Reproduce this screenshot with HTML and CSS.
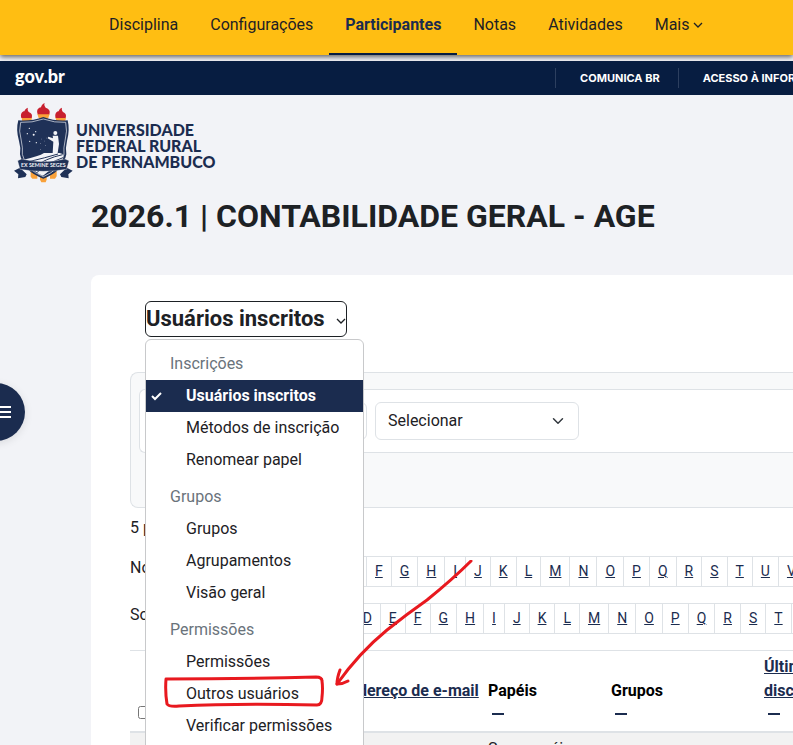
FILE: index.html
```html
<!DOCTYPE html>
<html lang="pt-br">
<head>
	<meta charset="utf-8">
	<title>2026.1 | CONTABILIDADE GERAL - AGE</title>
	<link rel="stylesheet" href="styles.css">
</head>
<body>

<nav class="course-nav">
	<a href="#">Disciplina</a>
	<a href="#">Configurações</a>
	<a href="#" class="active">Participantes</a>
	<a href="#">Notas</a>
	<a href="#">Atividades</a>
	<a href="#">Mais <svg class="caret" viewBox="0 0 10 6"><path d="M1 1l4 4 4-4"/></svg></a>
</nav>

<div class="govbar">
	<div class="govbar-brand"><a href="#">gov.br</a></div>
	<a class="govbar-link" href="#">COMUNICA BR</a>
	<a class="govbar-link" href="#">ACESSO À INFORMAÇÃO</a>
</div>

<header class="site-header">
	<a class="brand" href="#">
		<svg class="crest" viewBox="40 38 177 240">
			<!-- torches -->
			<g fill="#f9a13a">
				<path d="M63 83l31-2-2 12-4 3v10H70v-8l-5-3zM110 71h37l-4 12-4 4v10h-20V87l-5-4zM164 81l32 2-3 12-4 3v8h-18v-10l-4-3z"/>
				<path d="M90 240h20v25H95l-5-6zM118 246h20v22l-3 8h-13l-4-8zM148 240h20v18l-5 7h-15z"/>
			</g>
			<g fill="#c8202f">
				<path d="M62 83c-4-13 3-20 9-20 2-6 6-9 11-11-3 6 1 9 2 13 9 3 12 10 9 18zM111 72c-5-14 3-20 10-21 1-6 5-10 11-13-3 7 1 10 3 14 10 3 15 10 11 20zM165 83c-4-13 3-20 9-20 2-6 5-9 10-11-2 6 1 9 3 13 8 3 11 10 8 18z"/>
			</g>
			<!-- shield -->
			<path fill="#1f3157" d="M128 80q35 13 73 10 7 28-2 62-5 20-2 40-10 52-69 73-60-21-70-73 3-20-3-40-10-34-2-62 40 3 75-10z"/>
			<path fill="none" stroke="#f2f3f7" stroke-width="2" d="M128 86q34 12 67 10 6 25-2 56-5 21-3 40-10 46-62 67-53-21-63-67 2-19-3-40-9-31-2-56 34 2 68-10z"/>
			<!-- sower and field -->
			<g fill="#f2f3f7">
				<circle cx="164" cy="128" r="6"/>
				<path d="M156 136h16l3 25-4 27h-15l2-34-17-10 2-5 14 5z"/>
				<path d="M68 208q47-10 62-20h47l11 4-2 17-59 47q-14-4-24-14l37-30q-32 10-50 14-14-5-22-18z"/>
				<circle cx="86" cy="114" r="2"/><circle cx="105" cy="124" r="2"/>
				<circle cx="80" cy="130" r="2"/><circle cx="99" cy="133" r="3"/>
				<circle cx="87" cy="153" r="2"/><circle cx="107" cy="157" r="2"/>
				<circle cx="123" cy="146" r="1"/><circle cx="132" cy="152" r="1"/>
				<circle cx="120" cy="160" r="1"/><circle cx="134" cy="166" r="1"/>
				<circle cx="119" cy="178" r="1"/><circle cx="137" cy="143" r="1"/>
			</g>
			<path fill="none" stroke="#1f3157" stroke-width="3" d="M186 193q-50 10-94 42M187 202q-45 16-79 45M172 191q-40 12-84 22"/>
			<!-- ribbon -->
			<path fill="#1f3157" d="M40 241l18-9 20 20-4 8-22 4 1-12zM216 241l-18-9-20 20 4 8 22 4-1-12z"/>
			<path fill="#1f3157" stroke="#f2f3f7" stroke-width="1" d="M51 211l12-5q65 16 130 0l12 5-7 26q-70 12-140 0z"/>
			<text class="crest-motto" x="128" y="229" text-anchor="middle">EX SEMINE SEGES</text>
		</svg>
		<span class="brand-name">UNIVERSIDADE<br>FEDERAL RURAL<br>DE PERNAMBUCO</span>
	</a>
	<h1>2026.1 | CONTABILIDADE GERAL - AGE</h1>
</header>

<main class="content">
	<div class="tertiary-nav">
		<button type="button" class="select-toggle" aria-haspopup="listbox" aria-expanded="true">
			Usuários inscritos
			<svg class="caret" viewBox="0 0 10 6"><path d="M1 1l4 4 4-4"/></svg>
		</button>
		<div class="select-menu">
			<h6>Inscrições</h6>
			<a href="#" class="selected"><svg class="check" viewBox="0 0 12 10"><path d="M1 5l3 3 6-6"/></svg>Usuários inscritos</a>
			<a href="#">Métodos de inscrição</a>
			<a href="#">Renomear papel</a>
			<h6>Grupos</h6>
			<a href="#">Grupos</a>
			<a href="#">Agrupamentos</a>
			<a href="#">Visão geral</a>
			<h6>Permissões</h6>
			<a href="#">Permissões</a>
			<a href="#">Outros usuários</a>
			<a href="#">Verificar permissões</a>
		</div>
	</div>

	<div class="filters">
		<div class="filter-row">
			<select class="filter-select" aria-label="Corresponder"><option></option></select>
			<select class="filter-select" aria-label="Tipo de filtro"><option>Selecionar</option></select>
		</div>
	</div>

	<p class="count">5 participantes</p>

	<div class="initialbar">
		<span class="initialbar-label">Nome</span>
		<a href="#">Todos</a><a href="#">A</a><a href="#">B</a><a href="#">C</a><a href="#">D</a><a href="#">E</a><a href="#">F</a><a href="#">G</a><a href="#">H</a><a href="#">I</a><a href="#">J</a><a href="#">K</a><a href="#">L</a><a href="#">M</a><a href="#">N</a><a href="#">O</a><a href="#">P</a><a href="#">Q</a><a href="#">R</a><a href="#">S</a><a href="#">T</a><a href="#">U</a><a href="#">V</a>
	</div>
	<div class="initialbar">
		<span class="initialbar-label">Sobrenome</span>
		<a href="#">Todos</a><a href="#">A</a><a href="#">B</a><a href="#">C</a><a href="#">D</a><a href="#">E</a><a href="#">F</a><a href="#">G</a><a href="#">H</a><a href="#">I</a><a href="#">J</a><a href="#">K</a><a href="#">L</a><a href="#">M</a><a href="#">N</a><a href="#">O</a><a href="#">P</a><a href="#">Q</a><a href="#">R</a><a href="#">S</a><a href="#">T</a><a href="#">U</a>
	</div>

	<table class="participants">
		<colgroup>
			<col class="col-check"><col class="col-name"><col class="col-email"><col class="col-roles"><col class="col-groups"><col class="col-access">
		</colgroup>
		<thead>
			<tr>
				<th><input type="checkbox" aria-label="Selecionar todos"></th>
				<th><a href="#">Nome</a></th>
				<th class="nowrap"><a href="#">Endereço de e-mail</a><button type="button" class="hide-col" aria-label="Ocultar"></button></th>
				<th>Papéis<button type="button" class="hide-col" aria-label="Ocultar"><span></span></button></th>
				<th>Grupos<button type="button" class="hide-col" aria-label="Ocultar"><span></span></button></th>
				<th><a href="#">Último acesso à disciplina</a><button type="button" class="hide-col" aria-label="Ocultar"><span></span></button></th>
			</tr>
		</thead>
		<tbody>
			<tr><td></td><td></td><td></td><td>Sem papéis</td><td></td><td></td></tr>
		</tbody>
	</table>
</main>

<button type="button" class="drawer-toggle" aria-label="Abrir índice">
	<svg viewBox="0 0 14 13"><path d="M0 1h14M0 6h14M0 11h14"/></svg>
</button>

<svg class="marker" viewBox="0 0 320 150">
	<path d="M6 119q-1 13 1 25 2 3 12 2 60-3 138-1 5 0 5-8 1-9 0-16 0-4-6-4-75 2-150 2"/>
	<path d="M311 1q-18 18-44 39-20 14-40 30-28 23-50 54"/>
	<path d="M180 110q-3 8-3 14 6 0 11-3"/>
</svg>

</body>
</html>
```
FILE: styles.css
```css
* {
	box-sizing: border-box;
}
body {
	margin: 0;
	height: 100vh;
	overflow: hidden;
	position: relative;
	background: #f2f3f7;
	color: #1d2125;
	font-family: Roboto, Arial, sans-serif;
	font-size: 16px;
	line-height: 24px;
}
a {
	color: #1b2c4f;
}
button, select {
	font-family: inherit;
	color: inherit;
}
.caret, .check {
	fill: none;
	stroke: currentColor;
}
.caret {
	width: 10px;
	height: 6px;
	stroke-width: 1.3;
}

/* course navigation */
.course-nav {
	display: flex;
	height: 55px;
	padding-left: 93px;
	background: #ffbe12;
	box-shadow: 0 2px 5px rgba(0,0,0,.6);
}
.course-nav a {
	display: flex;
	align-items: center;
	gap: 3px;
	padding: 0 16px 2px;
	border-bottom: 3px solid transparent;
	color: #1d2125;
	text-decoration: none;
	white-space: nowrap;
}
.course-nav .active {
	padding-bottom: 4px;
	border-bottom: 2px solid #071d41;
	color: #1b2c4f;
	font-weight: bold;
}

/* government bar */
.govbar {
	display: flex;
	align-items: center;
	height: 34px;
	margin-top: 6px;
	background: #071d41;
}
.govbar a {
	color: #fff;
	text-decoration: none;
	white-space: nowrap;
}
.govbar-brand {
	flex: 0 0 70%;
	padding: 0 0 4px 15px;
	font-family: Lato, sans-serif;
	font-size: 18px;
	font-weight: 900;
}
.govbar-link {
	padding: 0 18px 0 24px;
	border-left: 1px solid #2c3f5f;
	font-family: Inter, sans-serif;
	font-size: 11px;
	line-height: 20px;
	font-weight: bold;
}

/* brand and title */
.site-header {
	padding: 8px 0 39px 14px;
}
.brand {
	display: flex;
	gap: 3px;
	text-decoration: none;
}
.crest {
	width: 59px;
	height: 80px;
}
.crest-motto {
	fill: #f2f3f7;
	font-family: Lato, sans-serif;
	font-size: 16px;
	font-weight: bold;
}
.brand-name {
	padding-top: 19px;
	font-family: Lato, sans-serif;
	font-size: 16px;
	font-weight: 900;
	line-height: 16px;
}
h1 {
	margin: 13px 0 0 77px;
	font-size: 32px;
	line-height: 40px;
	white-space: nowrap;
}

/* content */
.content {
	margin-left: 91px;
	padding: 26px 0 0 39px;
	background: #fff;
	border-radius: 8px 0 0 0;
}
.tertiary-nav {
	position: relative;
	margin-left: 15px;
}
.select-toggle {
	display: flex;
	align-items: center;
	gap: 11px;
	height: 36px;
	padding: 0 0 2px;
	border: 1px solid #1d2125;
	border-radius: 6px;
	background: #fff;
	font-size: 22px;
	font-weight: bold;
}
.select-toggle .caret {
	margin-top: 6px;
}
.select-menu {
	position: absolute;
	z-index: 2;
	top: 38px;
	left: 0;
	width: 219px;
	padding: 3px 0 8px;
	border: 1px solid #c8c9cb;
	border-radius: 6px;
	background: #fff;
}
.select-menu h6 {
	margin: 0;
	padding: 9px 24px 4px;
	color: #6a737b;
	font-size: 16px;
	font-weight: normal;
}
.select-menu a {
	display: block;
	position: relative;
	padding: 4px 0 4px 40px;
	color: #1d2125;
	text-decoration: none;
	white-space: nowrap;
}
.select-menu .selected {
	background: #1b2c4f;
	color: #fff;
	font-weight: bold;
}
.check {
	position: absolute;
	left: 5px;
	top: 11px;
	width: 12px;
	height: 10px;
	stroke-width: 2;
}

.filters {
	margin-top: 35px;
	height: 136px;
	padding: 16px 0 0 8px;
	border: 1px solid #dee2e6;
	border-right: 0;
	border-radius: 8px 0 0 8px;
	background: #f8f9fa;
}
.filter-row {
	display: flex;
	gap: 8px;
	padding: 12px;
	border: 1px solid #dee2e6;
	border-right: 0;
	border-radius: 6px 0 0 6px;
	background: #fff;
}
.filter-select {
	appearance: none;
	width: 204px;
	height: 38px;
	padding: 0 12px 2px;
	border: 1px solid #dee2e6;
	border-radius: 6px;
	font-size: 16px;
	background: #fff url("data:image/svg+xml,%3Csvg xmlns='http://www.w3.org/2000/svg' viewBox='0 0 16 16'%3E%3Cpath fill='none' stroke='%23343a40' stroke-linecap='round' stroke-linejoin='round' stroke-width='2' d='m2 5 6 6 6-6'/%3E%3C/svg%3E") no-repeat right 14px center / 12px 12px;
}
.filter-select:first-child {
	width: 215px;
}
.count {
	margin: 8px 0 16px;
}

.initialbar {
	display: flex;
	align-items: center;
	height: 31px;
	margin-bottom: 16px;
}
.initialbar-label {
	margin: -8px 9px 0 0;
}
.initialbar a {
	flex: none;
	height: 31px;
	padding: 0 8px;
	border: 1px solid #dee2e6;
	border-left: 0;
	font-size: 14px;
	line-height: 29px;
}

/* participants table */
.participants {
	table-layout: fixed;
	width: 776px;
	border-collapse: collapse;
	border-top: 1px solid #dee2e6;
}
.col-check { width: 30px; }
.col-name { width: 172px; }
.col-email { width: 148px; }
.col-roles { width: 123px; }
.col-groups { width: 153px; }
.col-access { width: 150px; }
.participants th, .participants td {
	padding: 4px 8px;
	text-align: left;
	vertical-align: bottom;
}
.participants th {
	border-bottom: 2px solid #dee2e6;
	color: #000;
}
.participants .nowrap {
	white-space: nowrap;
}
.participants td {
	height: 32px;
	background: #f2f2f2;
}
.participants input {
	display: block;
	margin: 0 0 8px;
}
.hide-col {
	display: flex;
	align-items: center;
	height: 24px;
	padding: 0 4px 2px;
	border: 0;
	background: none;
}
.hide-col span {
	width: 12px;
	height: 2px;
	background: #1b2c4f;
}

.drawer-toggle {
	position: fixed;
	left: -33px;
	top: 383px;
	width: 58px;
	height: 58px;
	padding: 0 0 0 30px;
	border: 0;
	border-radius: 50%;
	background: #1b2c4f;
	box-shadow: 0 2px 8px rgba(0,0,0,.1);
}
.drawer-toggle svg {
	display: block;
	width: 14px;
	height: 13px;
	stroke: #fff;
	stroke-width: 2;
}

/* hand drawn marker */
.marker {
	position: absolute;
	z-index: 3;
	left: 160px;
	top: 560px;
	width: 320px;
	height: 150px;
	pointer-events: none;
	fill: none;
	stroke: #e8191f;
	stroke-width: 3;
	stroke-linecap: round;
	stroke-linejoin: round;
}
```
